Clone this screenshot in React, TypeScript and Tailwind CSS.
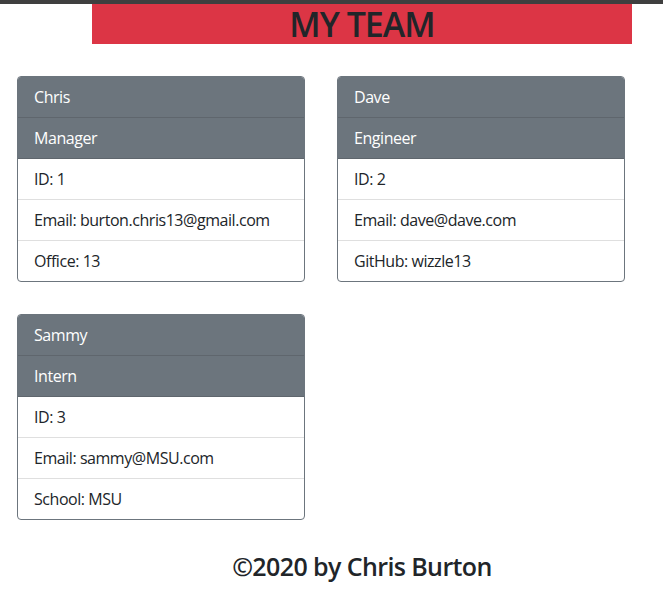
import React from 'react';

interface Employee {
  name: string;
  role: string;
  id: number;
  email: string;
  extra: string;
}

const TEAM: Employee[] = [
  { name: 'Chris', role: 'Manager', id: 1, email: 'burton.chris13@gmail.com', extra: 'Office: 13' },
  { name: 'Dave', role: 'Engineer', id: 2, email: 'dave@dave.com', extra: 'GitHub: wizzle13' },
  { name: 'Sammy', role: 'Intern', id: 3, email: 'sammy@MSU.com', extra: 'School: MSU' },
];

const EmployeeCard: React.FC<{ emp: Employee }> = ({ emp }) => {
  return (
    <div className="w-[288px] rounded-[4px] border border-[#6c757d] overflow-hidden bg-white">
      <div className="bg-[#6c757d] text-white px-4 py-2 leading-6 border-b border-[#5f666d]">{emp.name}</div>
      <div className="bg-[#6c757d] text-white px-4 py-2 leading-6 border-b border-[#5f666d]">{emp.role}</div>
      <ul className="text-[#212529]">
        <li className="px-4 py-2 leading-6 border-b border-[#dfdfdf]">ID: {emp.id}</li>
        <li className="px-4 py-2 leading-6 border-b border-[#dfdfdf]">Email: {emp.email}</li>
        <li className="px-4 py-2 leading-6">{emp.extra}</li>
      </ul>
    </div>
  );
}

export default function App() {
  return (
    <div className="min-h-[606px] bg-white font-['Open_Sans',sans-serif] text-[16px] tracking-[-0.45px]">
      <div className="h-[4px] bg-[#3f3f3f]" />

      {/* Header */}
      <div className="ml-[92px] w-[540px] h-[40px] bg-[#dc3545] flex items-center justify-center">
        <h1 className="text-[34px] font-semibold text-[#212529] leading-none tracking-[-1px]">MY TEAM</h1>
      </div>

      {/* Cards */}
      <div className="mt-[32px] ml-[17px] grid grid-cols-[288px_288px] gap-x-[32px] gap-y-[32px]">
        {TEAM.map((emp) => (
          <EmployeeCard key={emp.id} emp={emp} />
        ))}
      </div>

      {/* Footer */}
      <div className="ml-[92px] w-[540px] mt-[31px] text-center">
        <h3 className="text-[25px] font-semibold text-[#212529] leading-[30px] tracking-[-0.6px]">©2020 by Chris Burton</h3>
      </div>
    </div>
  );
}
